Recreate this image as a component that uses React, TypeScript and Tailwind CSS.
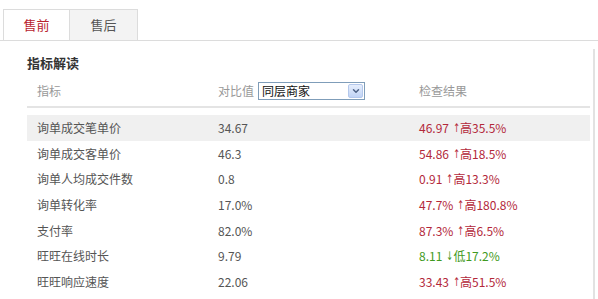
import { ChevronDown } from 'lucide-react'

const rows = [
  { name: '询单成交笔单价', value: '34.67', num: '46.97', diff: '高35.5%', up: true },
  { name: '询单成交客单价', value: '46.3', num: '54.86', diff: '高18.5%', up: true },
  { name: '询单人均成交件数', value: '0.8', num: '0.91', diff: '高13.3%', up: true },
  { name: '询单转化率', value: '17.0%', num: '47.7%', diff: '高180.8%', up: true },
  { name: '支付率', value: '82.0%', num: '87.3%', diff: '高6.5%', up: true },
  { name: '旺旺在线时长', value: '9.79', num: '8.11', diff: '低17.2%', up: false },
  { name: '旺旺响应速度', value: '22.06', num: '33.43', diff: '高51.5%', up: true },
]

export default function App() {
  return (
    <div className="w-[598px] h-[299px] overflow-hidden bg-white text-[12px] font-['Microsoft_YaHei','Noto_Sans_CJK_SC',sans-serif]">
      {/* tabs */}
      <div className="flex pt-[9px] pl-[3px] border-b border-[#dcdcdc]">
        <div className="w-[67px] h-[31px] -mb-px flex items-center justify-center bg-white border-l border-t border-r border-[#dcdcdc] text-[13px] text-[#b8232f]">
          售前
        </div>
        <div className="w-[68px] h-[31px] flex items-center justify-center bg-[#f3f3f3] border-t border-r border-[#dcdcdc] text-[13px] text-[#555]">
          售后
        </div>
      </div>

      <div className="mt-[8px] mr-[3px] h-[260px] border-r-2 border-[#e2e2e2] pl-[27px] pr-[3px]">
        <div className="pt-[6px] h-[26px] text-[13px] font-bold text-[#333] leading-[16px]">指标解读</div>

        {/* header */}
        <div className="flex items-center h-[33px] pl-[10px] border-b-2 border-[#e4e4e4] text-[#999]">
          <div className="w-[181px]">指标</div>
          <div className="w-[201px] flex items-center">
            <span className="mr-[4px]">对比值</span>
            <div className="w-[107px] h-[18px] flex items-center justify-between border border-[#7f9db9] bg-white pl-[3px] pr-px text-[#111]">
              <span>同层商家</span>
              <span className="w-[15px] h-[14px] flex items-center justify-center rounded-[2px] border border-[#b4c8ec] bg-gradient-to-b from-[#e6eefc] to-[#c0d3f5]">
                <ChevronDown className="w-[10px] h-[10px] text-[#4d6185]" strokeWidth={3.5} />
              </span>
            </div>
          </div>
          <div>检查结果</div>
        </div>

        {/* rows */}
        <div className="mt-[7px]">
          {rows.map((r, i) => (
            <div
              key={r.name}
              className={`flex items-center h-[25.7px] pl-[10px] ${i === 0 ? 'bg-[#f0f0f0]' : ''}`}
            >
              <div className="w-[181px] text-[#555]">{r.name}</div>
              <div className="w-[201px] text-[#555]">{r.value}</div>
              <div className={`flex items-center ${r.up ? 'text-[#b3283a]' : 'text-[#3f9a22]'}`}>
                <span>{r.num}</span>
                <span className="ml-[3px] mr-[-1px] font-['DejaVu_Sans_Condensed','DejaVu_Sans',sans-serif] text-[12px] scale-x-75">
                  {r.up ? '↑' : '↓'}
                </span>
                <span>{r.diff}</span>
              </div>
            </div>
          ))}
        </div>
      </div>
    </div>
  )
}
